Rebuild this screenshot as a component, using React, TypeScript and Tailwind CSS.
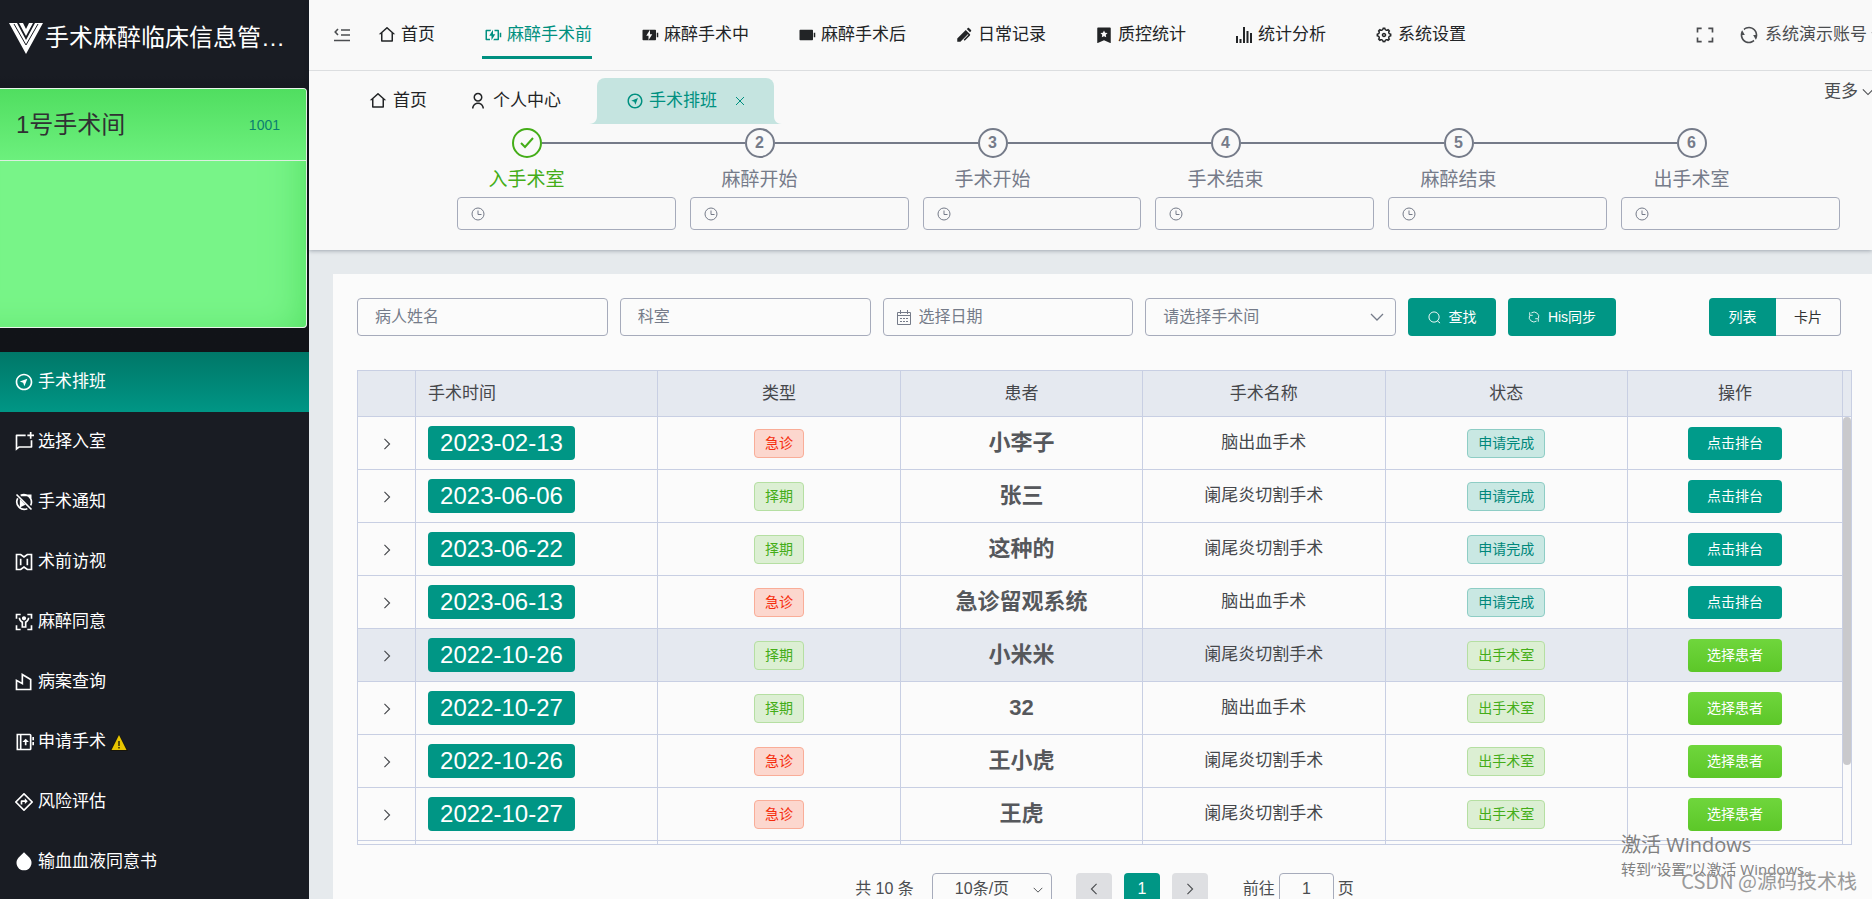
import React from 'react';
import {
  RiHome2Line,
  RiBatteryChargeLine,
  RiBatteryChargeFill,
  RiBatteryFill,
  RiBallPenFill,
  RiBookmark3Fill,
  RiSettings5Line,
  RiFullscreenLine,
  RiRefreshLine,
  RiUserLine,
  RiCompassDiscoverLine,
  RiChatNewLine,
  RiBodyScanLine,
  RiContactsBookUploadLine,
  RiDirectionLine,
  RiDropFill,
} from 'react-icons/ri';

type IconType = React.ComponentType<{ className?: string }>;

interface MenuItem {
  label: string;
  icon: IconType;
  active?: boolean;
  warn?: boolean;
}

interface Surgery {
  date: string;
  urgent: boolean;
  patient: string;
  operation: string;
  done: boolean;
  current?: boolean;
}

const LogoIcon: IconType = ({ className }) => (
  <svg viewBox="0 0 34 31" className={className} aria-hidden="true">
    <path d="M0 0h8l9 17L26 0h8L17 31z" fill="#fff" />
    <path d="M10 0h4l3 6 3-6h4l-7 13z" fill="#fff" />
    <path d="M5 1l12 21L29 1" fill="none" stroke="#191c23" strokeWidth="1" />
  </svg>
);

const FoldIcon: IconType = ({ className }) => (
  <svg viewBox="0 0 16 16" className={className} fill="none" stroke="currentColor" strokeWidth="1.6" aria-hidden="true">
    <path d="M7 3h9M7 8h9M0 13.500h16M4 2L1.200 5 4 8" />
  </svg>
);

const BarsIcon: IconType = ({ className }) => (
  <svg viewBox="0 0 18 18" className={className} fill="none" stroke="currentColor" strokeWidth="2" aria-hidden="true">
    <path d="M2 17v-7M5.500 17v-4M9 17V1M12.500 17V5M16 17V7" />
  </svg>
);

const NoticeIcon: IconType = ({ className }) => (
  <svg viewBox="0 0 24 24" className={className} fill="none" stroke="currentColor" strokeWidth="2" aria-hidden="true">
    <path d="M3 3l18 18M8 4h12v4a9 9 0 0 1 0 8M16 20A9 9 0 0 1 4.500 7.500M8 4a9 9 0 0 1 12 4" />
    <path d="M8 11l4 4-4 2z" fill="currentColor" />
  </svg>
);

const VisitIcon: IconType = ({ className }) => (
  <svg viewBox="0 0 24 24" className={className} fill="none" stroke="currentColor" strokeWidth="2" aria-hidden="true">
    <path d="M3 3h5l4 3 4-3h5v18h-5l-4-3-4 3H3zM8 8v8M16 8v8" />
  </svg>
);

const RecordIcon: IconType = ({ className }) => (
  <svg viewBox="0 0 24 24" className={className} fill="none" stroke="currentColor" strokeWidth="2" aria-hidden="true">
    <path d="M3 21V10l7 4V3l10 6v12z" />
  </svg>
);

const WarnIcon: IconType = ({ className }) => (
  <svg viewBox="0 0 18 17" className={className} aria-hidden="true">
    <path d="M9 0l9 17H0z" fill="#17140a" />
    <path d="M9 1l7.500 15h-15z" fill="#e8c500" />
    <path d="M9 7v5M9 13v1.500" stroke="#17140a" strokeWidth="1.300" />
  </svg>
);

const ClockIcon: IconType = ({ className }) => (
  <svg viewBox="0 0 14 14" className={className} fill="none" stroke="currentColor" aria-hidden="true">
    <circle cx="7" cy="7" r="6" />
    <path d="M7 3.500V7.500h3.500" />
  </svg>
);

const CalendarIcon: IconType = ({ className }) => (
  <svg viewBox="0 0 14 15" className={className} fill="none" stroke="currentColor" aria-hidden="true">
    <path d="M.5 2.500h13v12H.5zM.5 5.500h13M3.500 0v4M10.500 0v4M3 8.500h2M6 8.500h2M9 8.500h2M3 11.500h2M6 11.500h2M9 11.500h2" />
  </svg>
);

const ChevronIcon: IconType = ({ className }) => (
  <svg viewBox="0 0 14 14" className={className} fill="none" stroke="currentColor" strokeWidth="1.300" aria-hidden="true">
    <path d="M1 4l6 6 6-6" />
  </svg>
);

const SearchIcon: IconType = ({ className }) => (
  <svg viewBox="0 0 14 14" className={className} fill="none" stroke="currentColor" aria-hidden="true">
    <circle cx="6.500" cy="6.500" r="5.500" />
    <path d="M10 10.500l3 2.500" />
  </svg>
);

const SyncIcon: IconType = ({ className }) => (
  <svg viewBox="0 0 14 14" className={className} fill="none" stroke="currentColor" aria-hidden="true">
    <path d="M4 2.200a5.500 5.500 0 0 1 8.300 6.300M10 11.800A5.500 5.500 0 0 1 1.700 5.500M2 1.500v3.500h3.500M12 12.500V9H8.500" />
  </svg>
);

const sideMenu: MenuItem[] = [
  { label: '手术排班', icon: RiCompassDiscoverLine, active: true },
  { label: '选择入室', icon: RiChatNewLine },
  { label: '手术通知', icon: NoticeIcon },
  { label: '术前访视', icon: VisitIcon },
  { label: '麻醉同意', icon: RiBodyScanLine },
  { label: '病案查询', icon: RecordIcon },
  { label: '申请手术', icon: RiContactsBookUploadLine, warn: true },
  { label: '风险评估', icon: RiDirectionLine },
  { label: '输血血液同意书', icon: RiDropFill },
];

const topMenu: MenuItem[] = [
  { label: '首页', icon: RiHome2Line },
  { label: '麻醉手术前', icon: RiBatteryChargeLine, active: true },
  { label: '麻醉手术中', icon: RiBatteryChargeFill },
  { label: '麻醉手术后', icon: RiBatteryFill },
  { label: '日常记录', icon: RiBallPenFill },
  { label: '质控统计', icon: RiBookmark3Fill },
  { label: '统计分析', icon: BarsIcon },
  { label: '系统设置', icon: RiSettings5Line },
];

const steps = ['入手术室', '麻醉开始', '手术开始', '手术结束', '麻醉结束', '出手术室'];

const surgeries: Surgery[] = [
  { date: '2023-02-13', urgent: true, patient: '小李子', operation: '脑出血手术', done: false },
  { date: '2023-06-06', urgent: false, patient: '张三', operation: '阑尾炎切割手术', done: false },
  { date: '2023-06-22', urgent: false, patient: '这种的', operation: '阑尾炎切割手术', done: false },
  { date: '2023-06-13', urgent: true, patient: '急诊留观系统', operation: '脑出血手术', done: false },
  { date: '2022-10-26', urgent: false, patient: '小米米', operation: '阑尾炎切割手术', done: true, current: true },
  { date: '2022-10-27', urgent: false, patient: '32', operation: '脑出血手术', done: true },
  { date: '2022-10-26', urgent: true, patient: '王小虎', operation: '阑尾炎切割手术', done: true },
  { date: '2022-10-27', urgent: true, patient: '王虎', operation: '阑尾炎切割手术', done: true },
];

const Sidebar = () => (
  <aside className="flex w-[309px] shrink-0 flex-col bg-[#191c23] text-white">
    <div className="flex h-[76px] items-center gap-[2px] pl-[9px] pr-6">
      <LogoIcon className="h-[31px] w-[34px] shrink-0" />
      <h1 className="truncate text-2xl">手术麻醉临床信息管理系统</h1>
    </div>

    <div className="bg-gradient-to-b from-[#191c23] to-[#111318] to-15% pb-6 pt-3 pr-[2px]">
      <section className="h-[240px] overflow-hidden rounded-r border border-l-0 border-[#e9f5ea] bg-[#78f488] shadow-[inset_-24px_-12px_40px_-24px_#50de60]">
        <div className="flex h-[72px] items-center justify-between border-b border-[#dcefe0] bg-gradient-to-b from-[#50de60] to-[#6cf07d] pl-4 pr-[26px]">
          <h2 className="text-2xl text-[#303133]">1号手术间</h2>
          <span className="text-sm text-[#0b7f70]">1001</span>
        </div>
      </section>
    </div>

    <nav className="flex flex-col">
      {sideMenu.map(({ label, icon: Icon, active, warn }) => (
        <a
          key={label}
          href="#"
          className={`flex h-[60px] shrink-0 items-center gap-1 pl-[14px] text-[17px] ${
            active ? 'bg-gradient-to-b from-[#007768] to-[#009685]' : ''
          }`}
        >
          <Icon className="h-5 w-5" />
          <span>{label}</span>
          {warn && <WarnIcon className="h-[17px] w-[18px]" />}
        </a>
      ))}
    </nav>
  </aside>
);

const TopBar = () => (
  <header className="flex h-[71px] items-center overflow-hidden whitespace-nowrap border-b border-[#dcdee0] pl-[25px] text-[17px]">
    <button type="button" aria-label="折叠菜单" className="mr-[26px] text-[#4b4d50]">
      <FoldIcon className="h-4 w-4" />
    </button>
    <nav className="flex gap-[47px]">
      {topMenu.map(({ label, icon: Icon, active }) => (
        <a
          key={label}
          href="#"
          className={`flex h-12 items-center gap-[5px] border-y-[3px] border-t-transparent pl-[2px] ${
            active ? 'border-b-[#009080] text-[#009080]' : 'border-b-transparent text-[#222426]'
          }`}
        >
          <Icon className="h-[18px] w-[18px]" />
          {label}
        </a>
      ))}
    </nav>
    <div className="-mr-[11px] ml-auto flex items-center text-[#4b4d50]">
      <button type="button" aria-label="全屏" className="mr-6">
        <RiFullscreenLine className="h-5 w-5" />
      </button>
      <button type="button" aria-label="刷新" className="mr-[6px]">
        <RiRefreshLine className="h-5 w-5" />
      </button>
      <button type="button" className="flex items-center gap-1">
        系统演示账号
        <ChevronIcon className="h-3 w-3" />
      </button>
    </div>
  </header>
);

const TabBar = () => (
  <div className="flex h-[53px] items-end overflow-hidden whitespace-nowrap pl-[60px] text-[17px] text-[#222426]">
    <a href="#" className="flex h-[46px] items-center gap-[6px]">
      <RiHome2Line className="h-[18px] w-[18px]" />
      首页
    </a>
    <a href="#" className="ml-[42px] flex h-[46px] items-center gap-[6px]">
      <RiUserLine className="h-[18px] w-[18px]" />
      个人中心
    </a>
    <div className="ml-7 flex items-end text-[#c5e4e0]">
      <svg viewBox="0 0 8 8" className="h-2 w-2" fill="currentColor" aria-hidden="true">
        <path d="M8 0v8H0C6 8 8 4 8 0z" />
      </svg>
      <div className="flex h-[46px] items-center rounded-t-lg bg-[#c5e4e0] px-[29px] text-[#009080]">
        <a href="#" className="flex items-center gap-[5px]">
          <RiCompassDiscoverLine className="h-[18px] w-[18px]" />
          手术排班
        </a>
        <button type="button" aria-label="关闭" className="ml-[18px]">
          <svg viewBox="0 0 10 10" className="h-[10px] w-[10px]" stroke="currentColor" aria-hidden="true">
            <path d="M1 1l8 8M9 1L1 9" />
          </svg>
        </button>
      </div>
      <svg viewBox="0 0 8 8" className="h-2 w-2" fill="currentColor" aria-hidden="true">
        <path d="M0 0v8h8C2 8 0 4 0 0z" />
      </svg>
    </div>
    <button type="button" className="-mr-[2px] ml-auto flex items-center gap-1 self-start pt-2 text-[#4b4d50]">
      更多
      <ChevronIcon className="h-3 w-3" />
    </button>
  </div>
);

const Steps = () => (
  <div className="pb-5 pt-1">
    <ol className="grid grid-cols-6 pl-[101px] pr-16">
      {steps.map((label, i) => (
        <li key={label} className={`flex flex-col items-center ${i === 0 ? 'text-[#44ad18]' : 'text-[#757b89]'}`}>
          <div className="flex items-center self-stretch">
            <span className={`h-[2px] flex-1 ${i === 0 ? '' : 'bg-[#757b89]'}`} />
            <span className="flex h-[30px] w-[30px] items-center justify-center rounded-full border-2 border-current font-bold">
              {i === 0 ? (
                <svg viewBox="0 0 16 16" className="h-4 w-4" fill="none" stroke="currentColor" strokeWidth="2" aria-hidden="true">
                  <path d="M2 8l4 4 8-9" />
                </svg>
              ) : (
                i + 1
              )}
            </span>
            <span className={`h-[2px] flex-1 ${i === steps.length - 1 ? '' : 'bg-[#757b89]'}`} />
          </div>
          <label htmlFor={`step-${i}`} className="mt-[5px] text-[19px] leading-[34px]">
            {label}
          </label>
        </li>
      ))}
    </ol>
    <div className="grid grid-cols-6 gap-[14px] pl-[148px] pr-8">
      {steps.map((label, i) => (
        <div key={label} className="flex h-[33px] items-center rounded border border-[#a6abbb] px-[13px] text-[#757b89]">
          <ClockIcon className="h-[14px] w-[14px] shrink-0" />
          <input id={`step-${i}`} type="text" className="w-full min-w-0 bg-transparent pl-2 outline-none" />
        </div>
      ))}
    </div>
  </div>
);

const Filters = () => (
  <form className="flex gap-3 pr-[11px] text-base">
    <div className="grid min-w-0 flex-1 grid-cols-4 gap-3">
      <input
        type="text"
        aria-label="病人姓名"
        placeholder="病人姓名"
        className="h-[38px] min-w-0 rounded border border-[#a6abbb] px-[17px] placeholder:text-[#757b89]"
      />
      <input
        type="text"
        aria-label="科室"
        placeholder="科室"
        className="h-[38px] min-w-0 rounded border border-[#a6abbb] px-[17px] placeholder:text-[#757b89]"
      />
      <div className="flex h-[38px] min-w-0 items-center gap-2 rounded border border-[#a6abbb] px-[13px] text-[#757b89]">
        <CalendarIcon className="h-[15px] w-[14px] shrink-0" />
        <input
          type="text"
          aria-label="选择日期"
          placeholder="选择日期"
          className="w-full min-w-0 bg-transparent outline-none placeholder:text-[#757b89]"
        />
      </div>
      <div className="relative min-w-0 text-[#757b89]">
        <select
          aria-label="请选择手术间"
          className="h-[38px] w-full appearance-none rounded border border-[#a6abbb] bg-transparent px-[17px]"
        >
          <option>请选择手术间</option>
        </select>
        <ChevronIcon className="pointer-events-none absolute right-3 top-3 h-[14px] w-[14px]" />
      </div>
    </div>
    <button type="button" className="flex h-[38px] w-[88px] items-center justify-center gap-2 rounded-sm bg-[#009685] text-sm text-white">
      <SearchIcon className="h-[13px] w-[13px]" />
      查找
    </button>
    <button type="button" className="flex h-[38px] w-[108px] items-center justify-center gap-2 rounded-sm bg-[#009685] text-sm text-white">
      <SyncIcon className="h-3 w-3" />
      His同步
    </button>
    <div className="ml-[81px] flex w-[132px] text-sm">
      <button type="button" className="h-[38px] w-[67px] rounded-l bg-[#009685] text-white">
        列表
      </button>
      <button type="button" className="h-[38px] flex-1 rounded-r border border-l-0 border-[#a6abbb] text-[#303133]">
        卡片
      </button>
    </div>
  </form>
);

const SurgeryTable = () => (
  <div className="relative mt-[34px] overflow-hidden border border-[#c8cfe3]">
    <table className="w-full table-fixed border-separate border-spacing-0 text-center text-[17px] text-[#45474b]">
      <colgroup>
        <col className="w-[58px]" />
        <col />
        <col />
        <col />
        <col />
        <col />
        <col className="w-[215px]" />
        <col className="w-2" />
      </colgroup>
      <thead>
        <tr className="h-[46px] bg-[#e5e9f0] [&>th]:border-b [&>th]:border-r [&>th]:border-[#c8cfe3] [&>th]:font-normal">
          <th aria-label="展开" />
          <th className="pl-3 text-left">手术时间</th>
          <th>类型</th>
          <th>患者</th>
          <th>手术名称</th>
          <th>状态</th>
          <th>操作</th>
          <th aria-hidden="true" className="border-r-0!" />
        </tr>
      </thead>
      <tbody>
        {surgeries.map((row, i) => (
          <tr
            key={i}
            className={`h-[53px] [&>td]:border-b [&>td]:border-r [&>td]:border-[#c8cfe3] ${row.current ? 'bg-[#e5e9f0]' : ''}`}
          >
            <td>
              <button type="button" aria-label="展开" className="align-middle">
                <ChevronIcon className="h-3 w-3 -rotate-90" />
              </button>
            </td>
            <td className="pl-3 text-left">
              <span className="inline-block h-[34px] w-[147px] rounded bg-[#009685] text-center align-middle text-2xl leading-[34px] text-white">
                {row.date}
              </span>
            </td>
            <td>
              <span
                className={`inline-block h-[29px] w-[50px] rounded border text-sm leading-[27px] align-middle ${
                  row.urgent ? 'border-[#f9ad98] bg-[#fcd7ce] text-[#f52c0c]' : 'border-[#b5dfa2] bg-[#dcefd3] text-[#44ad18]'
                }`}
              >
                {row.urgent ? '急诊' : '择期'}
              </span>
            </td>
            <td className="text-[22px] font-bold leading-8 text-[#56585c]">{row.patient}</td>
            <td>{row.operation}</td>
            <td>
              <span
                className={`inline-block h-[29px] w-[78px] rounded border text-sm leading-[27px] align-middle ${
                  row.done ? 'border-[#b5dfa2] bg-[#dcefd3] text-[#44ad18]' : 'border-[#8ecdc5] bg-[#c9e8e3] text-[#00877a]'
                }`}
              >
                {row.done ? '出手术室' : '申请完成'}
              </span>
            </td>
            <td>
              <button
                type="button"
                className={`h-[33px] w-[94px] rounded-sm align-middle text-sm text-white ${
                  row.done ? 'bg-gradient-to-b from-[#6fd63c] to-[#5cc728]' : 'bg-[#009b8a]'
                }`}
              >
                {row.done ? '选择患者' : '点击排台'}
              </button>
            </td>
            <td aria-hidden="true" className="border-b-0! border-r-0!" />
          </tr>
        ))}
      </tbody>
      {/* Sliver that hints at more rows below the fold */}
      <tfoot aria-hidden="true">
        <tr className="h-[3px] [&>td]:border-r [&>td]:border-[#c8cfe3]">
          <td />
          <td />
          <td />
          <td />
          <td />
          <td />
          <td />
          <td className="border-r-0!" />
        </tr>
      </tfoot>
    </table>
    <div className="absolute right-0 top-[46px] h-[348px] w-2 rounded bg-[#c9c9cc]" />
  </div>
);

const Pagination = () => (
  <div className="mt-7 flex items-center justify-center text-base text-[#4b4d50]">
    <span className="mr-[18px]">共 10 条</span>
    <div className="relative mr-6">
      <select
        aria-label="每页条数"
        className="h-8 w-[120px] appearance-none rounded border border-[#a6abbb] bg-transparent pl-[22px]"
      >
        <option>10条/页</option>
      </select>
      <ChevronIcon className="pointer-events-none absolute right-[9px] top-3 h-[10px] w-[10px]" />
    </div>
    <div className="flex gap-3">
      <button type="button" aria-label="上一页" className="flex h-8 w-9 items-center justify-center rounded-sm bg-[#dedfe2]">
        <ChevronIcon className="h-3 w-3 rotate-90" />
      </button>
      <button type="button" className="h-8 w-9 rounded-sm bg-[#009685] text-white">
        1
      </button>
      <button type="button" aria-label="下一页" className="flex h-8 w-9 items-center justify-center rounded-sm bg-[#dedfe2]">
        <ChevronIcon className="h-3 w-3 -rotate-90" />
      </button>
    </div>
    <label htmlFor="page" className="ml-[35px] mr-1">
      前往
    </label>
    <input id="page" type="text" defaultValue="1" className="mr-1 h-8 w-[55px] rounded border border-[#a6abbb] text-center" />
    <span>页</span>
  </div>
);

const App: React.FC = () => {
  return (
    <div className="relative flex h-screen overflow-hidden bg-[#e6eaed] font-['Liberation_Sans','Noto_Sans_CJK_SC',sans-serif]">
      <Sidebar />
      <div className="flex min-w-0 flex-1 flex-col">
        <div className="shrink-0 bg-[#f9f9f9] shadow-[0_1px_4px_rgba(0,21,41,0.3)]">
          <TopBar />
          <TabBar />
          <Steps />
        </div>
        <main className="ml-6 mt-6 flex-1 bg-[#fbfbfb] pl-6 pr-5 pt-6">
          <Filters />
          <SurgeryTable />
          <Pagination />
        </main>
      </div>

      {/* Watermarks */}
      <div className="pointer-events-none absolute bottom-5 right-[48px] w-[203px] whitespace-nowrap font-['Open_Sans','Noto_Sans_CJK_SC',sans-serif] text-[#808080]">
        <p className="text-xl leading-7">激活 Windows</p>
        <p className="text-[15px] leading-5">转到“设置”以激活 Windows。</p>
      </div>
      <p className="pointer-events-none absolute bottom-1 right-[15px] font-['Noto_Sans_CJK_SC',sans-serif] text-xl leading-7 text-[#9a9a9a]">
        CSDN @源码技术栈
      </p>
    </div>
  );
};

export default App;
